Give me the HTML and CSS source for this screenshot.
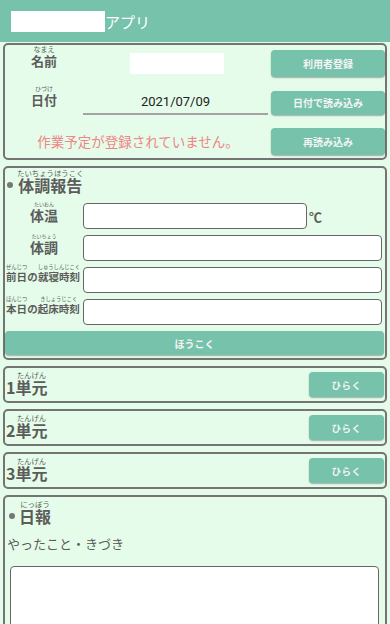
FILE: index.html
```html
<!DOCTYPE html>
<html lang="ja">
<head>
<meta charset="utf-8">
<title>アプリ</title>
<link rel="stylesheet" href="styles.css">
</head>
<body>
<header class="appbar">
  <span class="appbar-mask"></span>
  <span class="appbar-title">アプリ</span>
</header>
<main class="content">
  <section class="card card-user">
    <div class="label label-user"><span class="rb hang"><span class="rt rt-7">なまえ</span><span class="rbase">名前</span></span></div>
    <div class="mid"><span class="name-box"></span></div>
    <button class="btn">利用者登録</button>

    <div class="label label-user"><span class="rb hang"><span class="rt rt-6">ひづけ</span><span class="rbase">日付</span></span></div>
    <div class="mid"><div class="date-field">2021/07/09</div></div>
    <button class="btn">日付で読み込み</button>

    <div class="notice">作業予定が登録されていません。</div>
    <button class="btn">再読み込み</button>
  </section>

  <section class="card card-health">
    <div class="section-title">
      <span class="dot"></span>
      <span class="rb title-rb"><span class="rt">たいちょうほうこく</span><span class="rbase">体調報告</span></span>
    </div>
    <div class="health-form">
      <div class="label label-health"><span class="rb hang"><span class="rt rt-5">たいおん</span><span class="rbase">体温</span></span></div>
      <div class="temp-row"><span class="field field-temp"></span><span class="unit">℃</span></div>

      <div class="label label-health"><span class="rb hang"><span class="rt rt-5">たいちょう</span><span class="rbase">体調</span></span></div>
      <span class="field"></span>

      <div class="label label-small"><span class="rb hang"><span class="rt rt-s">ぜんじつ</span><span class="rbase">前日</span></span><span class="plain">の</span><span class="rb hang"><span class="rt rt-s">しゅうしんじこく</span><span class="rbase">就寝時刻</span></span></div>
      <span class="field"></span>

      <div class="label label-small"><span class="rb hang"><span class="rt rt-s">ほんじつ</span><span class="rbase">本日</span></span><span class="plain">の</span><span class="rb hang"><span class="rt rt-s">きしょうじこく</span><span class="rbase">起床時刻</span></span></div>
      <span class="field"></span>
    </div>
    <button class="btn btn-wide">ほうこく</button>
  </section>

  <section class="card card-unit">
    <div class="unit-title"><span class="num">1</span><span class="rb title-rb"><span class="rt">たんげん</span><span class="rbase">単元</span></span></div>
    <button class="btn btn-open">ひらく</button>
  </section>
  <section class="card card-unit">
    <div class="unit-title"><span class="num">2</span><span class="rb title-rb"><span class="rt">たんげん</span><span class="rbase">単元</span></span></div>
    <button class="btn btn-open">ひらく</button>
  </section>
  <section class="card card-unit">
    <div class="unit-title"><span class="num">3</span><span class="rb title-rb"><span class="rt">たんげん</span><span class="rbase">単元</span></span></div>
    <button class="btn btn-open">ひらく</button>
  </section>

  <section class="card card-diary">
    <div class="section-title">
      <span class="dot"></span>
      <span class="rb title-rb"><span class="rt">にっぽう</span><span class="rbase">日報</span></span>
    </div>
    <div class="diary-sub">やったこと・きづき</div>
    <div class="textarea"></div>
  </section>
</main>
</body>
</html>
```

FILE: styles.css
```css
* { box-sizing: border-box; }
html, body { margin: 0; padding: 0; }
body {
  width: 390px;
  background: #e4fce9;
  font-family: "Noto Sans CJK JP", "Noto Sans", sans-serif;
  color: #5c5c5c;
}

/* header */
.appbar {
  height: 42px;
  background: #76c2ab;
  display: flex;
  align-items: center;
  padding-left: 11px;
}
.appbar-mask { width: 94px; height: 21px; background: #fff; }
.appbar-title { color: #fff; font-size: 15px; line-height: 21px; }

/* layout */
.content {
  display: flex;
  flex-direction: column;
  gap: 6px;
  padding: 1px 3px 0;
}
.card {
  background: #e4fce9;
  border: 2px solid #747474;
  border-radius: 5px;
}

/* ruby */
.rb {
  display: inline-flex;
  flex-direction: column;
  align-items: center;
}
.rt { font-weight: 400; white-space: nowrap; color: #5c5c5c; }
.rbase { font-weight: 700; white-space: nowrap; }
.rt-7 { font-size: 7px; line-height: 7px; }
.rt-6 { font-size: 6px; line-height: 7px; }
.rt-5 { font-size: 5px; line-height: 6px; }
.rt-s { font-size: 5.3px; line-height: 6px; }
.hang .rt-7 { margin-top: -7px; }
.hang .rt-6 { margin-top: -7px; }
.hang .rt-5, .hang .rt-s { margin-top: -6px; }

/* user card */
.card-user {
  height: 117px;
  display: grid;
  grid-template-columns: 78px 188px 114px;
  grid-template-rows: 27px 24px 27px;
  row-gap: 13.5px;
  padding-top: 5px;
}
.label {
  display: flex;
  justify-content: center;
  align-items: center;
}
.label-user { font-size: 13px; line-height: 16px; padding-bottom: 5px; }
.mid { display: flex; justify-content: center; align-items: center; }
.name-box { width: 94px; height: 21px; background: #fff; }
.date-field {
  flex: 1;
  align-self: stretch;
  margin-right: 3px;
  border-bottom: 2px solid #a3a3a3;
  display: flex;
  align-items: center;
  justify-content: center;
  font-family: Roboto, "Noto Sans", sans-serif;
  font-size: 13px;
  color: #222;
}
.notice {
  grid-column: 1 / 3;
  align-self: center;
  text-align: center;
  color: #f08585;
  font-size: 13.5px;
  line-height: 18px;
  padding-bottom: 2px;
}

/* buttons */
.btn {
  border: none;
  border-radius: 4px;
  background: #76c2ab;
  color: #f4f4f4;
  font-family: "Noto Sans CJK JP", "Noto Sans", sans-serif;
  font-weight: 700;
  font-size: 10px;
  padding: 0;
  box-shadow: 0 1px 1.5px rgba(0, 0, 0, 0.3);
}
.btn-wide {
  height: 24px;
  margin: 6px 1px 0 0;
}
.btn-open {
  width: 75px;
  height: 25px;
  font-size: 9.5px;
  letter-spacing: 0.5px;
}

/* section titles */
.section-title {
  display: flex;
  align-items: flex-end;
  padding-left: 2px;
}
.dot {
  width: 6px;
  height: 6px;
  border-radius: 50%;
  background: #777;
  margin: 0 4px 6px 0;
}
.title-rb .rt { font-size: 7.4px; line-height: 7px; }
.title-rb .rbase { font-size: 16px; line-height: 18px; }

/* health card */
.card-health {
  height: 194px;
  display: flex;
  flex-direction: column;
  padding: 1px 0 0;
}
.health-form {
  display: grid;
  grid-template-columns: 78px 1fr;
  grid-auto-rows: 26px;
  row-gap: 6px;
  margin-top: 9px;
  padding-right: 3px;
}
.label-health { font-size: 14px; line-height: 16px; padding-bottom: 2px; }
.label-small {
  font-size: 10.5px;
  line-height: 13px;
  font-weight: 700;
  align-items: flex-end;
  justify-content: flex-start;
  padding: 0 0 10px 1px;
}
.label-small .plain { line-height: 13px; }
.field {
  display: block;
  height: 26px;
  background: #fff;
  border: 1.5px solid #666;
  border-radius: 4px;
}
.temp-row { display: flex; align-items: center; }
.field-temp { width: 224px; }
.unit { font-size: 13px; font-weight: 700; margin-left: 2px; }

/* unit cards */
.card-unit {
  height: 37px;
  display: flex;
  align-items: center;
  justify-content: space-between;
  padding: 0 1px 0 1px;
}
.unit-title {
  display: flex;
  align-items: flex-end;
  font-size: 16px;
  font-weight: 700;
  line-height: 18px;
  margin-top: -2px;
}
.num { line-height: 18px; }

/* diary */
.card-diary {
  height: 160px;
  padding: 3px 6px 0 2px;
}
.diary-sub {
  font-size: 13px;
  line-height: 18px;
  margin-top: 10px;
}
.textarea {
  height: 110px;
  margin: 13px 0 0 3px;
  background: #fff;
  border: 1.5px solid #666;
  border-radius: 4px;
}
```
